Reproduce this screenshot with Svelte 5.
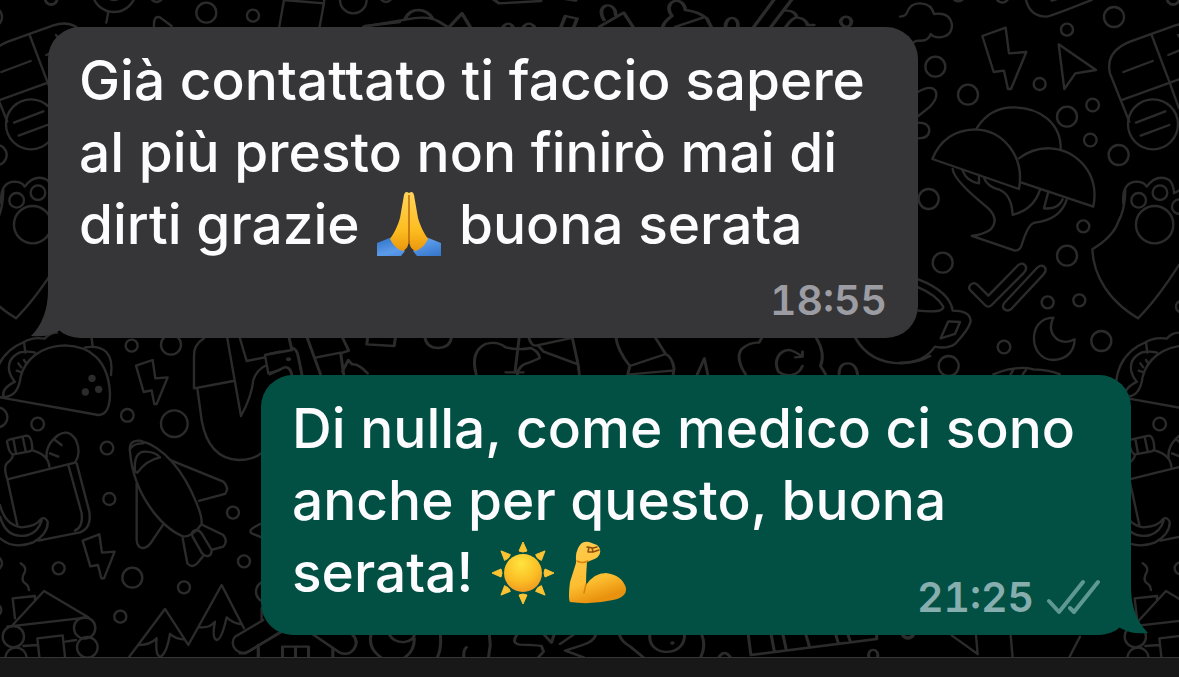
<script>
  const rays = [0, 45, 90, 135, 180, 225, 270, 315];
</script>

<svelte:head><title>Chat</title></svelte:head>

<div class="screen">
  <svg class="wallpaper" aria-hidden="true">
    <defs>
      <g id="doodles">
        <g transform="scale(.3333)">
          <circle cx="619" cy="38" r="30" /><circle cx="759" cy="47" r="18" /><circle cx="1060" cy="0" r="40" />
          <circle cx="153" cy="-4" r="18" /><circle cx="342" cy="-30" r="66" /><circle cx="342" cy="-30" r="30" />
          <circle cx="470" cy="-12" r="18" />
          <circle cx="1158" cy="-12" r="18" />
          <path d="M325 35L319 68M462 80Q460 45 480 52L515 78M838 80L852 0L972 10L959 80M968 30L974 -6M1095 78L1200 66M168 105L180 120" />
        </g>
        <g transform="translate(900 0) scale(.3333)">
          <path d="M0 50Q18 48 20 40Q30 8 62 10Q95 12 102 42Q150 35 156 75Q155 110 118 112Q100 112 92 102Q85 125 55 122Q45 122 40 128" />
          <circle cx="106" cy="200" r="30" /><circle cx="204" cy="284" r="30" /><circle cx="501" cy="89" r="18" />
          <circle cx="419" cy="252" r="18" /><circle cx="642" cy="51" r="30" /><circle cx="578" cy="315" r="19" />
          <circle cx="571" cy="420" r="19" /><circle cx="501" cy="350" r="30" /><circle cx="656" cy="465" r="30" />
          <circle cx="86" cy="597" r="30" /><circle cx="175" cy="-14" r="18" /><circle cx="307" cy="-10" r="18" />
          <circle cx="820" cy="-4" r="18" /><circle cx="759" cy="373" r="75" />
          <circle cx="716" cy="601" r="22" /><circle cx="780" cy="578" r="22" /><circle cx="764" cy="674" r="56" />
          <circle cx="838" cy="620" r="22" />
          <path d="M378 0Q390 50 440 50Q455 48 575 0M455 2L475 -4" />
          <path d="M247 108L317 83L327 160L379 156L333 267L324 267L312 212L281 216Z" />
          <path d="M476 133L588 210L526 220L493 267Z" />
          <path d="M55 275Q90 255 105 270Q118 290 90 320L55 348M55 368Q88 368 88 393Q85 415 55 415" />
          <path d="M230 385Q270 320 345 322C420 324 485 370 482 450" />
          <path d="M97 477C120 420 165 390 225 388C310 390 375 470 357 567Z" />
          <path d="M357 475Q400 443 450 445C530 450 600 520 580 620L365 548" />
          <path d="M158 507Q160 535 235 600L265 625Q300 660 270 690Q245 705 215 708L345 752Q360 752 365 735Q385 670 405 668Q480 660 500 600" />
          <path d="M188 512Q200 545 237 550L237 525M252 533Q260 560 300 570Q335 585 338 645Q400 630 420 570M445 575L432 625Q475 630 488 598" />
          <path d="M906 90Q876 60 826 76L690 125Q615 155 630 220L688 365M755 105L808 245L837 325M666 300L837 238M670 216L758 183M805 165L837 152M708 368L796 334M722 407L808 375" />
          <path d="M670 610Q665 545 712 545Q732 546 740 560Q771 520 808 540Q822 555 822 580L840 570M676 570Q675 630 655 665Q640 710 577 748C580 830 630 905 714 955Q770 900 837 795" />
        </g>
        <g transform="translate(900 190) scale(.3333)">
          <circle cx="128" cy="218" r="30" /><circle cx="550" cy="109" r="18" /><circle cx="501" cy="197" r="30" />
          <circle cx="443" cy="337" r="18" /><circle cx="538" cy="331" r="18" /><circle cx="604" cy="453" r="30" />
          <circle cx="312" cy="471" r="19" /><circle cx="146" cy="528" r="30" /><circle cx="846" cy="350" r="18" />
          <path d="M210 286Q222 272 236 288L265 317L355 225Q370 215 378 230Q380 240 370 250L275 345Q265 355 255 345L212 302Q204 295 210 286" />
          <path d="M312 340L413 232Q428 220 437 236Q438 246 430 254L333 358Q320 366 310 355Q307 348 312 340" />
          <path d="M460 383C380 383 385 510 460 510C505 508 523 480 524 448Q500 462 475 450Q440 425 460 383" />
          <path d="M55 268Q150 305 158 362Q212 362 212 395Q205 420 165 462Q140 478 105 470Q70 520 0 518M55 292Q110 315 130 350Q130 370 55 362M145 394L180 396L165 432L122 445Z" />
          <path d="M280 553Q350 525 400 538Q450 540 480 553M340 540L332 553M378 540L368 553" />
        </g>
        <g transform="translate(0 320) scale(.3333)">
          <path d="M-18 190Q-10 100 72 66Q100 50 134 56Q150 38 171 38M72 66L76 98M275 55L278 78M0 232L295 285Q330 285 330 220C325 120 270 78 195 76C120 78 75 120 62 170Q55 225 20 230L0 232" />
          <path d="M105 98Q85 92 60 97Q20 115 28 155Q32 170 42 182M255 82Q345 70 333 165M45 185Q5 205 10 228M55 130L64 142M50 152L62 156M72 120L80 132" />
          <circle class="dot" cx="276" cy="175" r="11" /><circle class="dot" cx="296" cy="208" r="11" /><circle class="dot" cx="256" cy="216" r="11" />
          <circle cx="395" cy="77" r="18" /><circle cx="513" cy="74" r="30" /><circle cx="382" cy="286" r="19" />
          <circle cx="523" cy="311" r="40" /><circle cx="113" cy="312" r="19" /><circle cx="321" cy="384" r="19" />
          <circle cx="-8" cy="292" r="30" />
          <path d="M408 137L458 120L466 175L503 172L470 252L463 252L455 211L431 216Z" />
          <path d="M612 55Q580 75 582 110L582 205L700 183M592 205L605 300Q625 415 715 420Q760 420 783 400M682 55L723 288Q755 230 760 180Q770 150 795 138M720 55L740 123L795 112M840 95L795 105L805 160L840 150" />
          <path d="M22 370Q18 362 30 358L80 347Q95 347 97 385Q97 393 85 395L40 403Q28 403 22 370M40 357L48 400M68 352L77 393M38 405Q40 415 20 430Q10 445 22 478L52 615M100 392Q145 405 148 440M22 478L225 428Q245 400 228 360Q205 325 175 345Q135 375 140 415M165 360L185 375M150 400L175 410M205 435L245 580Q250 620 225 632M230 430L268 575Q275 625 240 637L115 662" />
          <path d="M390 395Q385 360 420 362C490 380 550 450 590 550Q607 590 605 612Q580 650 550 650C480 620 400 520 390 395M405 455Q400 395 435 395Q465 395 480 412Q440 420 412 458ZM392 385Q400 370 430 370M410 490V660Q412 685 430 684Q445 682 455 665L492 610M515 422L670 485Q690 505 675 522L597 543" />
        </g>
        <g transform="translate(0 490) scale(.3333)">
          <circle cx="328" cy="27" r="18" /><circle cx="176" cy="235" r="18" /><circle cx="397" cy="263" r="30" />
          <circle cx="361" cy="380" r="18" /><circle cx="552" cy="292" r="18" /><circle cx="732" cy="214" r="18" />
          <circle cx="699" cy="68" r="18" /><circle cx="800" cy="305" r="32" /><circle cx="40" cy="440" r="32" />
          <circle cx="254" cy="414" r="32" /><circle cx="262" cy="472" r="31" /><circle cx="48" cy="505" r="32" />
          <circle cx="-14" cy="220" r="20" /><circle cx="-14" cy="360" r="18" />
          <path d="M0 45Q15 105 65 112Q110 108 122 88Q135 78 143 95Q145 130 100 157Q40 180 0 145M0 80Q20 150 85 135Q115 125 125 92" />
          <path d="M62 220Q80 232 75 245Q60 270 75 280Q85 285 87 300M248 152L298 133L306 188L344 185L312 265L304 265L294 225L271 229Z" />
          <path d="M38 405L132 303L265 382L22 410M45 385L38 325L105 318L105 330M70 468L112 465M197 455L228 450M118 500L112 445L188 436L195 500" />
          <path d="M608 105L670 135Q685 155 670 170L635 180M548 145L562 220Q575 235 590 222L608 200M578 140Q570 125 588 120Q598 120 605 130L635 180Q635 195 625 198Q612 200 605 188Z" />
          <path d="M388 500L495 357L565 465L665 285L732 415M415 465Q450 465 470 445Q465 500 482 500Q500 490 510 432Q530 450 555 448M598 412Q630 415 645 395Q635 445 650 450Q665 450 680 382Q700 400 722 402" />
          <path d="M785 100Q740 120 755 130L785 142M790 390L705 440Q690 460 708 480Q725 495 745 485L850 420M785 355V390M775 470V500" />
        </g>
        <g transform="translate(270 330) scale(.4209 .3333)">
          <path d="M45 22L52 60L0 72M50 52Q65 55 68 85L76 135M0 133L35 112Q48 110 52 135M88 22L120 133M108 83L168 68M172 22L187 62L168 70L175 133M172 125L186 90L195 103Q210 100 232 130M232 22L230 43L295 48L298 22M368 22Q372 54 400 54Q428 52 431 22" />
          <path d="M490 133Q475 65 512 42Q540 32 560 52Q590 62 620 54Q642 68 640 85L615 98Q590 105 588 133M592 22L582 128M560 127H602M615 22Q620 48 632 47L712 25M638 48L650 65L732 103L735 133M718 22L732 103M822 22Q825 60 855 108L850 133M855 108L940 72L915 22M940 72Q955 80 960 115L958 133M855 133L955 122M1015 133L1032 85L1040 133" />
          <path d="M1130 133Q1105 85 1120 58Q1140 35 1162 38L1168 24M1298 24Q1320 70 1308 108L1320 133M1265 108C1255 140 1225 142 1208 125C1195 90 1210 60 1235 60Q1250 65 1263 78M1265 65V80L1248 82M1352 133Q1352 100 1373 100Q1392 100 1396 133M1390 22C1415 80 1455 100 1500 100Q1540 98 1568 78" />
          <circle class="dot" cx="44" cy="88" r="6" />
        </g>
        <g transform="translate(240 620) scale(.4337 .3333)">
          <path d="M0 100H12L110 25M42 110V75M98 112V80H158V112M128 80V112M214 112V85M170 45L230 98Q250 108 262 88Q275 65 260 45M302 45Q295 85 325 112M345 45Q355 68 380 66Q400 60 402 45M402 55Q402 95 380 112M462 45Q465 85 455 112M522 82Q515 90 516 112M575 45L577 75L573 112" />
          <path d="M638 45Q625 70 645 74Q680 75 695 78L700 95L688 112M702 45L718 68L724 45M738 72L768 45M820 45Q815 65 790 75L750 92L792 112M875 45Q880 65 900 80L930 112M945 45C940 110 1025 115 1025 45M1065 45Q1075 80 1062 112M1105 110Q1117 88 1130 110M1172 45L1178 105L1468 57V45M1225 45L1232 95M1252 45L1260 92M1305 45L1313 80M1374 45L1380 72M1402 45L1408 67M1450 112C1445 82 1475 82 1470 112M1528 45Q1540 60 1552 45" />
          <circle class="dot" cx="997" cy="69" r="5" />
        </g>
        <g transform="translate(80 0) scale(.5357 .3333)">
          <path d="M530 80L610 58Q650 45 670 65L685 80M607 56Q615 30 632 30Q650 32 658 55M690 80L713 40L728 80M790 80Q800 62 808 80M828 80Q838 62 848 80M898 80L906 48L928 56L922 80M770 -4L782 10L860 3M902 -4L925 2" />
          <path d="M978 60C960 10 1000 0 1000 45M970 80L1015 38L1032 80M1105 48C1085 5 1125 -20 1130 30Q1155 35 1170 55L1178 80M1105 48Q1090 65 1088 80M1112 80L1165 52M1295 0L1258 80M1328 0L1290 80M1316 32Q1335 30 1338 52Q1355 55 1358 75H1370M1318 80Q1328 55 1338 52M1205 80C1205 45 1230 45 1228 80M1420 66C1420 45 1440 45 1440 66C1438 85 1424 85 1420 66" />
        </g>
        <g transform="translate(900 560) scale(.3333)">
          <circle cx="24" cy="216" r="20" />
          <path d="M155 226L233 282L228 226M332 226L338 292M540 230L508 292" />
        </g>
      </g>
      <pattern id="tile" width="1122" height="657" patternUnits="userSpaceOnUse">
        <use href="#doodles" x="-1122" /><use href="#doodles" /><use href="#doodles" x="1122" />
      </pattern>
    </defs>
    <rect width="100%" height="100%" fill="url(#tile)" />
  </svg>

  <main class="thread">
    <article class="bubble received">
      <p>
        Già contattato ti faccio sapere al più presto non finirò mai di dirti grazie
        <svg class="emoji" viewBox="0 0 66 66" role="img" aria-label="mani giunte">
          <defs>
            <linearGradient id="skin" x1="0" y1="0" x2="0" y2="1">
              <stop offset="0" stop-color="#ffd45b" /><stop offset=".65" stop-color="#fdbd20" /><stop offset="1" stop-color="#e9960d" />
            </linearGradient>
            <linearGradient id="sleeve" x1="0" y1="0" x2="1" y2="1">
              <stop offset="0" stop-color="#2f6fc4" /><stop offset=".5" stop-color="#5b9bea" /><stop offset="1" stop-color="#3474ca" />
            </linearGradient>
          </defs>
          <path fill="url(#sleeve)" d="M1 52L16 46L29 60L25 65H1ZM65 52L50 46L37 60L41 65H65Z" />
          <path fill="url(#skin)" d="M33 2Q29-1 28 4L24 27Q21 38 14 48Q19 58 27 60Q33 57 33 48Z" />
          <path fill="url(#skin)" d="M33 2Q37-1 38 4L42 27Q45 38 52 48Q47 58 39 60Q33 57 33 48Z" />
          <path fill="none" stroke="#b8680c" stroke-width="1.5" d="M33 4V53" />
        </svg>
        buona serata
      </p>
      <footer><time datetime="18:55">18:55</time></footer>
      <svg class="tail" viewBox="0 0 52 48" aria-hidden="true"><path d="M17 0Q17 29 0 46Q18 48 31 39Q39 47 52 48V0Z" /></svg>
    </article>

    <article class="bubble sent">
      <p>
        Di nulla, come medico ci sono anche per questo, buona serata!
        <svg class="emoji" viewBox="0 0 66 66" role="img" aria-label="sole">
          <defs>
            <radialGradient id="sun" cx=".45" cy=".25" r=".8">
              <stop offset="0" stop-color="#ffe43e" /><stop offset=".6" stop-color="#fbbd24" /><stop offset="1" stop-color="#ef9420" />
            </radialGradient>
          </defs>
          <circle cx="33" cy="34" r="19" fill="url(#sun)" />
          {#each rays as angle}
            <path d="M33 3L37 12Q33 14 29 12Z" fill="#fcc332" stroke="#fcc332" stroke-linejoin="round" transform="rotate({angle} 33 34)" />
          {/each}
        </svg>
        <svg class="emoji arm" viewBox="0 0 66 66" role="img" aria-label="bicipite">
          <defs>
            <linearGradient id="arm" x1="0" y1="0" x2=".3" y2="1">
              <stop offset="0" stop-color="#ffcd50" /><stop offset=".7" stop-color="#fdbd30" /><stop offset="1" stop-color="#e9920f" />
            </linearGradient>
          </defs>
          <path fill="url(#arm)" d="M16 6Q19 2 25 3L33 6Q37 9 36 14Q35 19 28 21L23 23Q22 35 22 46Q30 34 42 34Q58 36 62 49Q63 58 49 61Q27 66 6 63Q4 60 6 43L12 24Q11 12 16 6Z" />
          <path fill="none" stroke="#d98509" stroke-width="1.5" stroke-linecap="round" d="M22 45L20 54M13 22Q18 25 24 22" />
          <path fill="none" stroke="#8e4e0c" stroke-width="1.5" stroke-linecap="round" stroke-linejoin="round" d="M23 8L29 9L33 8M25 8L24 13H28M28 9L29 13L35 11" />
        </svg>
      </p>
      <footer>
        <time datetime="21:25">21:25</time>
        <svg class="checks" viewBox="0 0 54 36" role="img" aria-label="consegnato">
          <path d="M3 22L13 33L37 3M24 29L28 33L52 3" />
        </svg>
      </footer>
      <svg class="tail" viewBox="0 0 52 48" aria-hidden="true"><path d="M17 0Q17 29 0 46Q18 48 31 39Q39 47 52 48V0Z" /></svg>
    </article>
  </main>
  <div class="toolbar"></div>
</div>

<style>
  :global(body) { margin: 0; background: #000; }
  .screen {
    position: relative;
    display: flex;
    flex-direction: column;
    min-height: 100vh;
    overflow: hidden;
    background: #000;
    font-family: Inter, "Liberation Sans", sans-serif;
  }
  .wallpaper {
    position: absolute;
    inset: 0;
    width: 100%;
    height: 100%;
    fill: none;
    stroke: #2b2b2c;
    stroke-width: 7;
    stroke-linecap: round;
    stroke-linejoin: round;
  }
  .wallpaper .dot { fill: #2b2b2c; stroke: none; }
  .wallpaper rect { stroke: none; }
  .thread {
    position: relative;
    flex: 1;
    display: flex;
    flex-direction: column;
    gap: 37px;
    padding: 27px 48px 22px;
  }
  .bubble {
    position: relative;
    box-sizing: border-box;
    width: 100%;
    max-width: 870px;
    padding: 17px 31px 13px;
    border-radius: 32px;
    color: #fcfcff;
  }
  .received { --fill: #363638; background: var(--fill); align-self: flex-start; }
  .sent { --fill: #025044; background: var(--fill); align-self: flex-end; }
  p { margin: 0; font-size: 55px; line-height: 72px; font-weight: 550; }
  footer {
    display: flex;
    justify-content: flex-end;
    align-items: center;
    gap: 12px;
    font-size: 41px;
    line-height: 50px;
    font-weight: 600;
    font-variant-numeric: tabular-nums;
    color: #9c9ca3;
    margin-top: 15px;
  }
  .sent footer { width: fit-content; margin: -36px 0 0 auto; color: #86aeae; }
  .emoji { width: 66px; height: 66px; margin: 0 2px; vertical-align: -13px; }
  .arm { margin-left: -8px; }
  .checks {
    width: 54px;
    height: 36px;
    fill: none;
    stroke: #5f9890;
    stroke-width: 4;
    stroke-linecap: round;
    stroke-linejoin: round;
  }
  .tail { position: absolute; left: -17px; bottom: 0; width: 52px; height: 48px; fill: var(--fill); }
  .sent .tail { left: auto; right: -17px; transform: scaleX(-1); }
  .toolbar { position: relative; height: 19px; border-top: 1px solid #363636; background: #181818; }
</style>
